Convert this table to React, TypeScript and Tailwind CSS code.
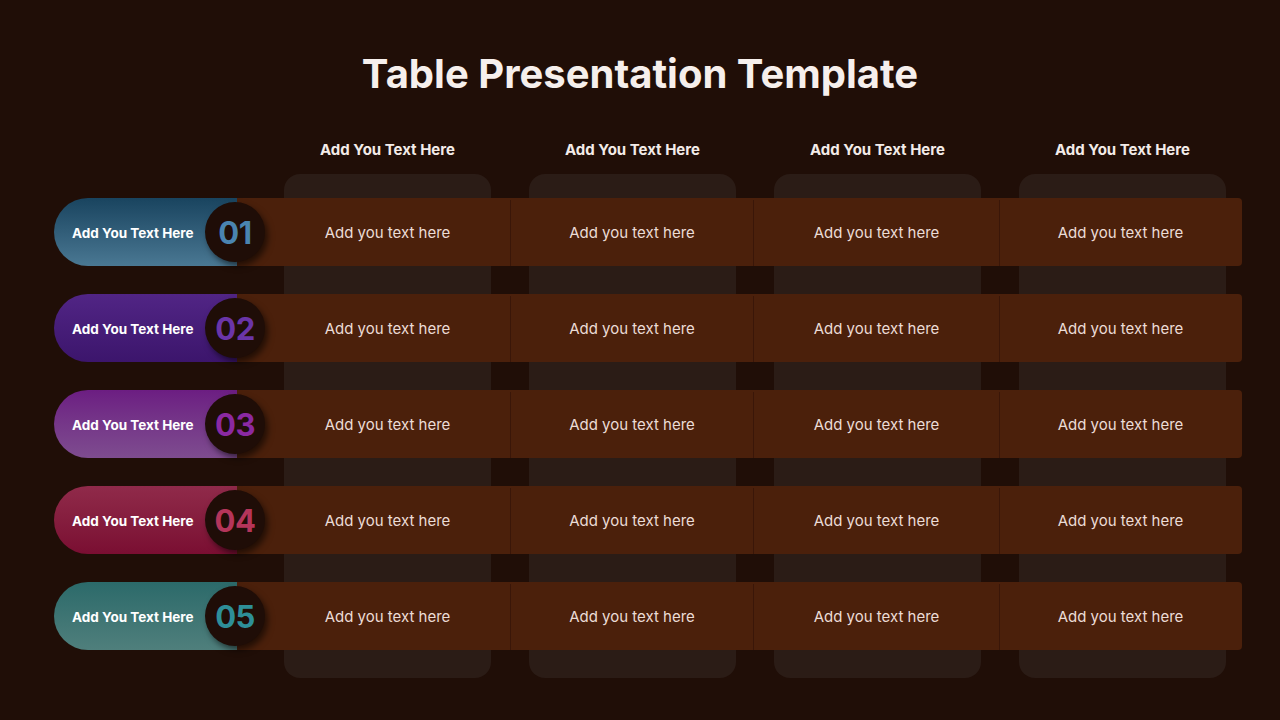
import React from 'react'

const rows = [
  { num: '01', pill: 'from-[#19445f] to-[#4a7893]', numColor: 'text-[#4a84b0]' },
  { num: '02', pill: 'from-[#512585] to-[#3c156c]', numColor: 'text-[#6a35a8]' },
  { num: '03', pill: 'from-[#6c1d82] to-[#7e4c8f]', numColor: 'text-[#8b29a2]' },
  { num: '04', pill: 'from-[#902a4a] to-[#7a0e32]', numColor: 'text-[#b4355a]' },
  { num: '05', pill: 'from-[#2b6a6a] to-[#4f7f7c]', numColor: 'text-[#2e8f98]' },
]

const cellWidths = ['w-[245px]', 'w-[243px] border-l border-[#3a1608]', 'w-[246px] border-l border-[#3a1608]', 'w-[242px] border-l border-[#3a1608]']
const cardCols = ['col-start-2', 'col-start-3', 'col-start-4', 'col-start-5']

function Row({ num, pill, numColor }: { num: string; pill: string; numColor: string }) {
  return (
    <div className="relative flex h-[68px] w-[1188px]">
      <div className={`w-[183px] rounded-l-full bg-gradient-to-b ${pill} flex items-center pl-[18px] pt-[2px]`}>
        <span className="text-[13.5px] font-bold text-white">Add You Text Here</span>
      </div>
      <div className="flex flex-1 rounded-r-[4px] bg-[#4b200b] pt-[2px]">
        <div className="w-[28px]"></div>
        {cellWidths.map((w, i) => (
          <div key={i} className={`${w} flex items-center justify-center text-[15px] text-[#ebdcd6]`}>
            Add you text here
          </div>
        ))}
      </div>
      <div className="absolute left-[151px] top-[4px] flex h-[60px] w-[60px] items-center justify-center rounded-full bg-[#1f0d07] shadow-[3px_4px_6px_rgba(0,0,0,0.55)]">
        <span className={`text-[31px] font-bold leading-none tracking-[-0.5px] ${numColor}`}>{num}</span>
      </div>
    </div>
  )
}

export default function App() {
  return (
    <div className="flex h-[720px] w-[1280px] flex-col bg-[#200e07]" style={{ fontFamily: 'Inter, "Noto Sans", sans-serif' }}>
      <div className="h-[124px] pt-[50px] text-center">
        <h1 className="text-[40px] font-bold leading-[48px] text-[#f6efec]">Table Presentation Template</h1>
      </div>

      <div className="ml-[54px] grid grid-cols-[211px_245px_245px_245px_245px] grid-rows-[50px_504px]">
        {['Add You Text Here', 'Add You Text Here', 'Add You Text Here', 'Add You Text Here'].map((t, i) => (
          <div key={i} className={`${cardCols[i]} row-start-1 flex items-center justify-center pt-[2px] text-[15px] font-bold text-[#f3ebe8]`}>
            {t}
          </div>
        ))}

        {cardCols.map((c, i) => (
          <div key={i} className={`${c} row-start-2 mx-[19px] rounded-[16px] bg-[#2b1c16]`}></div>
        ))}

        <div className="col-span-5 col-start-1 row-start-2 z-10 flex flex-col gap-[28px] pt-[24px] pb-[28px]">
          {rows.map((r) => (
            <Row key={r.num} {...r} />
          ))}
        </div>
      </div>
    </div>
  )
}
